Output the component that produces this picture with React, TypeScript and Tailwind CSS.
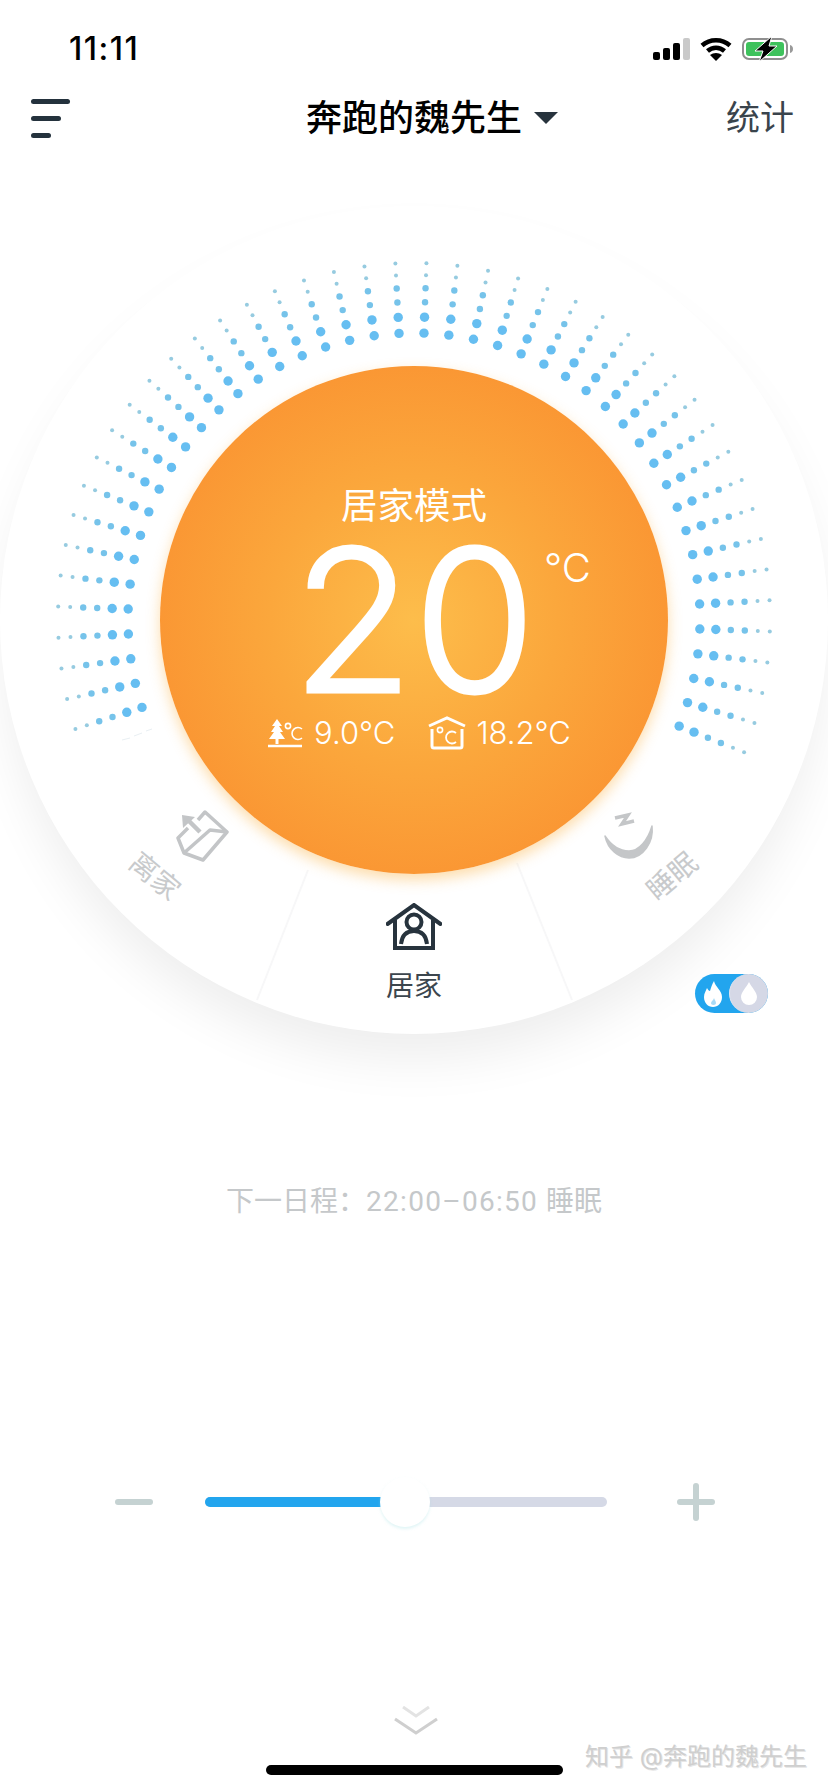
const CJK = "font-['Inter','Noto_Sans_CJK_SC',sans-serif]"

// radial dot field around the temperature dial
const rows = [
  { r: 286, d: 4.7, color: '#66bef1' },
  { r: 302, d: 4.7, color: '#66bef1' },
  { r: 317, d: 3.2, color: '#76c3ea' },
  { r: 331, d: 3.2, color: '#76c3ea' },
  { r: 344, d: 2, color: '#96cbe0' },
  { r: 356, d: 2, color: '#96cbe0' },
]

function DotField() {
  const rays = []
  for (let k = -22; k <= 22; k++) rays.push(2 + k * 5)
  return (
    <svg className="absolute inset-0" width="828" height="828" viewBox="0 0 828 828">
      <line x1="308" y1="664" x2="257" y2="794" stroke="#f7f7f8" strokeWidth="2" />
      <line x1="517" y1="657" x2="572" y2="794" stroke="#f7f7f8" strokeWidth="2" />
      <path d="M122 534l8-2M134 530l8-3M146 525l6-2" stroke="#e9eff3" strokeWidth="1" />
      {rays.map((deg) =>
        rows.map((row) => {
          const a = (deg * Math.PI) / 180
          return (
            <circle
              key={deg + '-' + row.r}
              cx={414 + Math.sin(a) * row.r}
              cy={413 - Math.cos(a) * row.r}
              r={row.d}
              fill={row.color}
            />
          )
        })
      )}
    </svg>
  )
}

function Signal() {
  return (
    <svg width="37" height="22" viewBox="0 0 37 22">
      <rect x="0" y="14" width="7" height="8" rx="2" fill="#000" />
      <rect x="10" y="10" width="7" height="12" rx="2" fill="#000" />
      <rect x="20" y="5" width="7" height="17" rx="2" fill="#000" />
      <rect x="30" y="0" width="7" height="22" rx="2" fill="#c9c9c9" />
    </svg>
  )
}

function Wifi() {
  return (
    <svg width="32" height="24" viewBox="0 0 32 24" fill="none" stroke="#000" strokeWidth="4.500">
      <path d="M2 8.500c8-7 20-7 28 0" />
      <path d="M7.500 14c5-4.400 12-4.400 17 0" />
      <path d="M16 24l-6-6c3.500-2.800 8.500-2.800 12 0z" fill="#000" stroke="none" />
    </svg>
  )
}

function Battery() {
  return (
    <svg width="52" height="26" viewBox="0 0 52 26">
      <rect x="1" y="3" width="44" height="20" rx="6" fill="#fff" stroke="#8f8f8f" strokeWidth="2" />
      <rect x="4" y="6" width="38" height="14" rx="3" fill="#3ec25c" />
      <path d="M48 9c2 .5 3 2 3 4s-1 3.500-3 4z" fill="#9a9a9a" />
      <path d="M30 0L13 15h8l-4 11 18-16h-8z" fill="#000" stroke="#fff" strokeWidth="1" />
    </svg>
  )
}

function LeaveIcon() {
  return (
    <svg width="54" height="54" viewBox="0 0 54 54" fill="none" stroke="#c3c5c7" strokeWidth="3.500" strokeLinejoin="round" className="absolute left-[176px] top-[604px]">
      <path d="M12 18L2 28L8 43L27 50L51 22L29 2L22 10" />
      <path d="M51 22L34 20L8 43" />
      <path d="M24 22L12 10" strokeWidth="4.500" />
      <path d="M6 5l13 2L7 18z" fill="#c3c5c7" stroke="none" />
    </svg>
  )
}

function MoonIcon() {
  return (
    <svg width="56" height="52" viewBox="0 0 56 52" fill="none" className="absolute left-[601px] top-[606px]">
      <path d="M4 24C7 38 18 46 28 46C42 46 53 30 51 14C47 28 38 39 28 39C18 39 10 33 4 24Z" fill="#c4c6c8" stroke="#c4c6c8" strokeWidth="1.500" strokeLinejoin="round" />
      <path d="M14 6l13-3-6 9 12-3" stroke="#c4c6c8" strokeWidth="3.500" />
    </svg>
  )
}

function HomeIcon() {
  return (
    <svg width="56" height="47" viewBox="0 0 56 47" fill="none" stroke="#27333d" strokeWidth="4" className="mx-auto">
      <path d="M1.500 21L28 2l26.500 19" strokeLinecap="round" />
      <path d="M9 17v28h38V17" />
      <circle cx="28" cy="19" r="7.500" />
      <path d="M15 41c1-9 6-13 13-13s12 4 13 13" />
    </svg>
  )
}

function TreeIcon() {
  return (
    <svg width="36" height="30" viewBox="0 0 36 30" fill="none" stroke="#fff" strokeWidth="1.600">
      <path d="M10 1l5 7h-3l4 6h-3l5 7H2l5-7H4l4-6H5z" fill="#fff" stroke="none" />
      <path d="M10 20v6" strokeWidth="3" />
      <path d="M1 28h34" strokeWidth="2.400" />
      <circle cx="21" cy="8" r="2.600" />
      <path d="M35 11a6 6 0 1 0 0 9" />
    </svg>
  )
}

function IndoorIcon() {
  return (
    <svg width="38" height="34" viewBox="0 0 38 34" fill="none" stroke="#fff" strokeWidth="3">
      <path d="M1 10l18-8 18 8" />
      <path d="M4 13v17q0 2 2 2h26q2 0 2-2V13" strokeLinejoin="round" />
      <circle cx="12" cy="14" r="2.600" strokeWidth="1.600" />
      <path d="M28 17a6 6 0 1 0 0 9" strokeWidth="1.800" />
    </svg>
  )
}

function ModeToggle() {
  return (
    <div className="absolute left-[695px] top-[768px] flex h-[39px] w-[73px] items-center justify-between rounded-full bg-[#22a5ee]">
      <svg width="20" height="26" viewBox="0 0 20 26" className="ml-[8px]">
        <path d="M11 0c1 6 8 9 8 16 0 6-4 10-9 10s-9-4-9-10c0-4 2-6 3-9 1 2 2 3 3 3 1-3 2-7 4-10z" fill="#fff" />
        <path d="M11 17c0 2-3 3-3 5 0 1 1 2 2.500 2s2.500-1 2.500-2c0-2-1.500-3-2-5z" fill="#a8daf6" />
      </svg>
      <div className="flex h-[39px] w-[39px] items-center justify-center rounded-full border-l border-[#e4e6ef] bg-[#d5d8e6]">
        <svg width="18" height="25" viewBox="0 0 18 25" fill="#fff">
          <path d="M9 1c3 6 8 10 8 15a8 8 0 0 1-16 0C1 11 6 7 9 1z" />
        </svg>
      </div>
    </div>
  )
}

export default function App() {
  return (
    <div className={`flex h-[1792px] w-[828px] flex-col overflow-hidden bg-white ${CJK}`}>
      {/* status bar */}
      <div className="flex h-[98px] items-center justify-between pl-[69px] pr-[34px]">
        <span className="text-[32px] font-medium tracking-[1.500px] text-black">11:11</span>
        <div className="flex items-center gap-[10px]">
          <Signal />
          <Wifi />
          <Battery />
        </div>
      </div>

      {/* nav */}
      <div className="flex h-[40px] items-center pl-[31px] pr-[34px]">
        <div className="flex w-[39px] flex-col gap-[12px]">
          <div className="h-[5px] w-[39px] rounded-full bg-[#24323d]" />
          <div className="h-[5px] w-[30px] rounded-full bg-[#24323d]" />
          <div className="h-[5px] w-[20px] rounded-full bg-[#24323d]" />
        </div>
        <div className="ml-[236px] flex items-center gap-[12px]">
          <span className="text-[36px] font-medium leading-none text-black">奔跑的魏先生</span>
          <div className="h-0 w-0 border-x-[12px] border-t-[12px] border-x-transparent border-t-[#27333d]" />
        </div>
        <span className="ml-auto text-[34px] leading-none text-[#3a444c]">统计</span>
      </div>

      {/* dial */}
      <div className="relative mt-[68px] h-[828px] w-[828px] shrink-0 rounded-full bg-white shadow-[0_30px_50px_-5px_rgba(0,0,0,0.07)]">
        <DotField />
        <div className="absolute left-[160px] top-[160px] flex h-[508px] w-[508px] flex-col items-center rounded-full bg-[radial-gradient(circle,#fdbd4b_0%,#fba73c_40%,#fa9030_85%,#fa8c2b_100%)] text-white shadow-[0_6px_14px_rgba(250,180,70,0.45)]">
          <span className="mt-[120px] text-[36.500px] leading-[40px]">居家模式</span>
          <div className="relative mt-[19px] h-[150px]">
            <span className="block text-[198px] font-light leading-[150px] [-webkit-text-stroke:3px_#ffffff]">20</span>
            <span className="absolute left-full top-[3px] ml-[8px] whitespace-nowrap text-[40px] font-light leading-[40px]">°C</span>
          </div>
          <div className="mt-[21px] flex items-center pl-[10px] text-[31px] font-light leading-[34px]">
            <TreeIcon />
            <span className="ml-[11px]">9.0°C</span>
            <div className="ml-[33px]"><IndoorIcon /></div>
            <span className="ml-[10px]">18.2°C</span>
          </div>
        </div>

        <LeaveIcon />
        <span className="absolute left-[127px] top-[656px] rotate-[40deg] text-[28px] leading-none text-[#c8cacc]">离家</span>

        <div className="absolute left-[359px] top-[697px] w-[110px] text-center">
          <HomeIcon />
          <div className="mt-[22px] text-[28px] leading-none text-[#3c464e]">居家</div>
        </div>

        <MoonIcon />
        <span className="absolute left-[644px] top-[656px] rotate-[-40deg] text-[28px] leading-none text-[#c8cacc]">睡眠</span>
        <ModeToggle />
      </div>

      {/* schedule */}
      <div className="mt-[149px] pl-[226px] text-[28px] leading-[36px] text-[#c5c8ca]">
        下一日程：<span className="font-['Roboto'] tracking-[1.300px]">22:00–06:50</span> 睡眠
      </div>

      {/* slider */}
      <div className="mt-[257px] flex h-[50px] items-center pl-[115px]">
        <div className="h-[6px] w-[38px] rounded-full bg-[#c5d2d2]" />
        <div className="relative ml-[52px] flex h-[10px] w-[402px] rounded-full bg-[#d5d9e6]">
          <div className="h-[10px] w-[180px] rounded-l-full bg-[#22a5ee]" />
          <div className="absolute left-[175px] top-[-20px] h-[50px] w-[50px] rounded-full bg-white shadow-[0_2px_3px_rgba(170,225,230,0.35)]" />
        </div>
        <div className="relative ml-[70px] h-[38px] w-[38px]">
          <div className="absolute left-0 top-[16px] h-[6px] w-[38px] rounded-full bg-[#c5d2d2]" />
          <div className="absolute left-[16px] top-0 h-[38px] w-[6px] rounded-full bg-[#c5d2d2]" />
        </div>
      </div>

      {/* bottom */}
      <div className="mt-[179px] flex justify-center pl-[3px]">
        <svg width="44" height="29" viewBox="0 0 44 29" fill="none" strokeWidth="3">
          <path d="M9 1l13 9 13-9" stroke="#e3e3e3" />
          <path d="M1 13l21 14 21-14" stroke="#cfcfcf" />
        </svg>
      </div>
      <div className="mt-[8px] flex items-start pl-[266px]">
        <div className="mt-[22px] h-[10px] w-[297px] rounded-full bg-black" />
        <span className="ml-[22px] whitespace-nowrap text-[24px] leading-[28px] text-[#cfcfcf] [text-shadow:1px_1px_0_#e6e6e6]">知乎 @奔跑的魏先生</span>
      </div>
    </div>
  )
}
